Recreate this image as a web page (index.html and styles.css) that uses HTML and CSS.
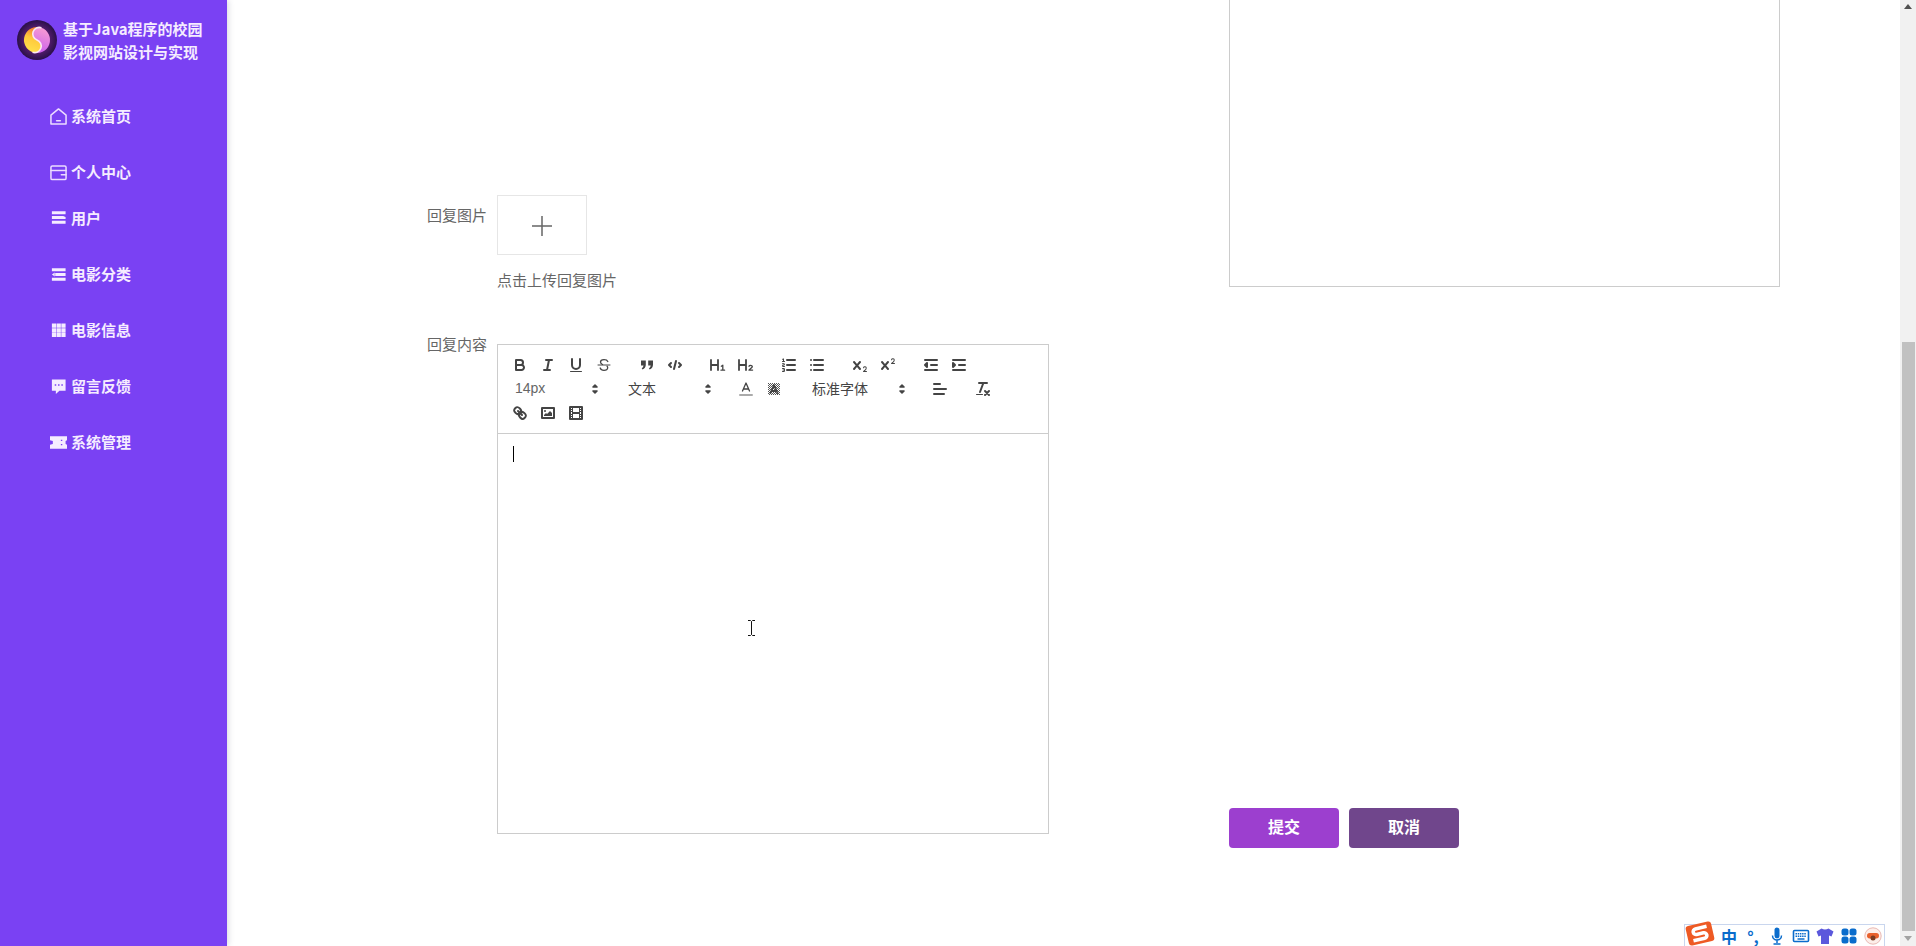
FILE: index.html
```html
<!DOCTYPE html>
<html lang="zh-CN">

<head>
    <meta charset="UTF-8">
    <meta name="viewport" content="width=device-width, initial-scale=1.0">
    <title>基于Java程序的校园影视网站设计与实现</title>

    <link rel="stylesheet" href="styles.css">
</head>

<body>
    <div class="app">
        <aside class="sidebar">
            <div class="brand">
                <svg class="brand-logo" viewBox="0 0 40 40">
                    <defs>
                        <radialGradient id="logoBg">
                            <stop offset="0" stop-color="#9a3fa8" />
                            <stop offset="0.7" stop-color="#4a1a66" />
                            <stop offset="1" stop-color="#2a1048" />
                        </radialGradient>
                        <linearGradient id="logoA" x1="0" y1="0" x2="0" y2="1">
                            <stop offset="0" stop-color="#ee6a2a" />
                            <stop offset="0.5" stop-color="#ffc93c" />
                            <stop offset="1" stop-color="#ffe04a" />
                        </linearGradient>
                        <linearGradient id="logoB" x1="0" y1="0" x2="0" y2="1">
                            <stop offset="0" stop-color="#f79ad4" />
                            <stop offset="1" stop-color="#c65cf0" />
                        </linearGradient>
                    </defs>
                    <circle cx="20" cy="20" r="20" fill="url(#logoBg)" />
                    <g transform="rotate(20 20 20)">
                        <path d="M20 7A13 13 0 0 0 20 33 6.500 6.500 0 0 0 20 20 6.500 6.500 0 0 1 20 7Z" fill="url(#logoA)" />
                        <path d="M20 7A13 13 0 0 1 20 33 6.500 6.500 0 0 0 20 20 6.500 6.500 0 0 1 20 7Z" fill="url(#logoB)" />
                        <path d="M20 7A6.500 6.500 0 0 0 20 20 6.500 6.500 0 0 1 20 33" fill="none" stroke="#fbe6f4" stroke-width="1.600" />
                    </g>
                </svg>
                <div class="brand-name">基于Java程序的校园<br>影视网站设计与实现</div>
            </div>

            <nav class="menu">
                <a class="menu-item">
                    <svg class="menu-icon line" viewBox="0 0 18 18"><path d="M9 1 17 7.500V17H1V7.500Z" /><path d="M7 13.500h4" /></svg>
                    系统首页
                </a>
                <a class="menu-item">
                    <svg class="menu-icon line" viewBox="0 0 18 18"><rect x="1" y="2" width="16" height="14.500" rx="1.500" /><path d="M1 7h16M12 11.500h5" /></svg>
                    个人中心
                </a>
                <a class="menu-item menu-item-short">
                    <svg class="menu-icon solid" viewBox="0 0 18 18"><path d="M2 2.500h14.500v3H2ZM2 7.500h12l2.500 1v2H2ZM2 12.500h14.500v3H2Z" /></svg>
                    用户
                </a>
                <a class="menu-item">
                    <svg class="menu-icon solid" viewBox="0 0 18 18"><path d="M2 2.500h14.500v3H2ZM5.500 7.500h11v3h-11ZM2 9l3-2v4ZM2 12.500h14.500v3H2Z" /></svg>
                    电影分类
                </a>
                <a class="menu-item">
                    <svg class="menu-icon solid" viewBox="0 0 18 18"><path d="M2 1.500h4.500V6H2ZM7 1.500h4.500V6H7ZM12 1.500h4.500V6H12ZM2 6.500h4.500V11H2ZM7 6.500h4.500V11H7ZM12 6.500h4.500V11H12ZM2 11.500h4.500V16H2ZM7 11.500h4.500V16H7ZM12 11.500h4.500V16H12Z" /></svg>
                    电影信息
                </a>
                <a class="menu-item">
                    <svg class="menu-icon solid" viewBox="0 0 18 18"><path fill-rule="evenodd" d="M2 1.500h14.500v12h-6.500l-3.800 3.500v-3.500H2ZM5 6.500v1.600h1.600V6.500ZM8.500 6.500v1.600h1.600V6.500ZM12 6.500v1.600h1.600V6.500Z" /></svg>
                    留言反馈
                </a>
                <a class="menu-item">
                    <svg class="menu-icon solid" viewBox="0 0 18 18"><path fill-rule="evenodd" d="M0 2.500h18v4l-1.500.8v3.400l1.500.8v4H0v-4l3-1V7.500l-3-1ZM11.500 6v1.500H13V6ZM11.500 10.500V12H13v-1.500Z" /></svg>
                    系统管理
                </a>
            </nav>
        </aside>

        <main class="main">
            <form class="form-col">
                <div class="form-row">
                    <label class="form-label">回复图片</label>
                    <div class="form-field">
                        <div class="upload-box">
                            <svg class="upload-plus" viewBox="0 0 20 20"><path d="M10 0v20M0 10h20" /></svg>
                        </div>
                        <div class="upload-tip">点击上传回复图片</div>
                    </div>
                </div>

                <div class="form-row form-row-editor">
                    <label class="form-label">回复内容</label>
                    <div class="editor">
                        <div class="toolbar">
                            <span class="tool-group">
                                <button type="button" class="tool"><svg viewBox="0 0 18 18"><path class="s" d="M5,4H9.500A2.500,2.500,0,0,1,12,6.500v0A2.500,2.500,0,0,1,9.500,9H5V4Z" /><path class="s" d="M5,9h5.500A2.500,2.500,0,0,1,13,11.500v0A2.500,2.500,0,0,1,10.500,14H5V9Z" /></svg></button>
                                <button type="button" class="tool"><svg viewBox="0 0 18 18"><path class="s" d="M7 4h6M5 14h6M8 14l2-10" /></svg></button>
                                <button type="button" class="tool"><svg viewBox="0 0 18 18"><path class="s" d="M5,3V9a4,4,0,0,0,4,4h0a4,4,0,0,0,4-4V3" /><rect class="f" height="1" rx=".5" width="12" x="3" y="15" /></svg></button>
                                <button type="button" class="tool"><svg viewBox="0 0 18 18"><path class="s thin" d="M3 9h12" /><path class="s mid" d="M12.800 5.500C12.300 4.300 10.900 3.700 9 3.700 6.800 3.700 5.500 4.500 5.500 6c0 1.200.8 2 2 2.500M5.200 12c.5 1.500 1.900 2.300 3.800 2.300 2.200 0 3.700-1 3.700-2.500 0-.7-.2-1.200-.6-1.600" /></svg></button>
                            </span>
                            <span class="tool-group">
                                <button type="button" class="tool"><svg viewBox="0 0 18 18"><path class="f" d="M3 4.500h4.800v4.300c0 2.300-1.300 4-3.300 4.700l-.8-1.200c1.100-.6 1.700-1.500 1.800-2.700H3ZM10.200 4.500H15v4.300c0 2.300-1.300 4-3.300 4.700l-.8-1.200c1.100-.6 1.700-1.500 1.800-2.700h-2.500Z" /></svg></button>
                                <button type="button" class="tool"><svg viewBox="0 0 18 18"><path class="s" d="M5 7 3 9l2 2M13 7l2 2-2 2M10 5 8 13" /></svg></button>
                            </span>
                            <span class="tool-group">
                                <button type="button" class="tool"><svg viewBox="0 0 18 18"><path class="s h" d="M2 4v10M9 4v10M2 9h7" /><path class="s mid" d="M12.300 10.200 13.800 9.200V14M12 14.200h3.600" /></svg></button>
                                <button type="button" class="tool"><svg viewBox="0 0 18 18"><path class="s h" d="M2 4v10M9 4v10M2 9h7" /><path class="s mid" d="M12 10.300c.3-1 3-1.300 3.300.2.200 1.200-2.300 2.200-3.300 3.600h3.600" /></svg></button>
                            </span>
                            <span class="tool-group">
                                <button type="button" class="tool"><svg viewBox="0 0 18 18"><path class="s" d="M7 4h8M7 9h8M7 14h8" /><path class="s thin" d="M2.500 5.500h2M3.500 5.500V2.800l-1 .5M2.500 7.700h1.800v1.400H2.600v1.400h1.900M2.500 12.500h1.900v3H2.500M3 14h1.400" /></svg></button>
                                <button type="button" class="tool"><svg viewBox="0 0 18 18"><path class="s" d="M6 4h9M6 9h9M6 14h9M3 4h.01M3 9h.01M3 14h.01" /></svg></button>
                            </span>
                            <span class="tool-group">
                                <button type="button" class="tool"><svg viewBox="0 0 18 18"><path class="f" d="M15.500,15H13.861a3.858,3.858,0,0,0,1.914-2.975,1.800,1.800,0,0,0-1.600-1.751A1.921,1.921,0,0,0,12.021,11.700a0.500,0.500,0,1,0,.957.291,0.914,0.914,0,0,1,1.053-.725,0.810,0.810,0,0,1,.744.762c0,1.076-1.170,1.870-1.940,2.431A1.456,1.456,0,0,0,12,15.500a0.500,0.500,0,0,0,.5.500h3A0.500,0.500,0,0,0,15.500,15Z" /><path class="f" d="M9.650,5.241a1,1,0,0,0-1.409.108L6,7.964,3.759,5.349A1,1,0,0,0,2.241,6.649L4.684,9.500,2.241,12.350A1,1,0,0,0,3.759,13.650L6,11.036,8.241,13.650a1,1,0,1,0,1.518-1.300L7.316,9.500,9.759,6.651A1,1,0,0,0,9.650,5.241Z" /></svg></button>
                                <button type="button" class="tool"><svg viewBox="0 0 18 18"><path class="f" d="M15.500,7H13.861a4.015,4.015,0,0,0,1.914-2.975,1.800,1.800,0,0,0-1.600-1.751A1.922,1.922,0,0,0,12.021,3.700a0.500,0.500,0,1,0,.957.291,0.917,0.917,0,0,1,1.053-.725,0.810,0.810,0,0,1,.744.762c0,1.077-1.164,1.925-1.934,2.486A1.423,1.423,0,0,0,12,7.500a0.500,0.500,0,0,0,.5.500h3A0.500,0.500,0,0,0,15.500,7Z" /><path class="f" d="M9.650,5.241a1,1,0,0,0-1.409.108L6,7.964,3.759,5.349A1,1,0,0,0,2.241,6.649L4.684,9.500,2.241,12.350A1,1,0,0,0,3.759,13.650L6,11.036,8.241,13.650a1,1,0,1,0,1.518-1.300L7.316,9.500,9.759,6.651A1,1,0,0,0,9.650,5.241Z" /></svg></button>
                            </span>
                            <span class="tool-group">
                                <button type="button" class="tool"><svg viewBox="0 0 18 18"><path class="s" d="M3 14h12M3 4h12M9 9h6" /><path class="s f" d="M5 7v4L3 9Z" /></svg></button>
                                <button type="button" class="tool"><svg viewBox="0 0 18 18"><path class="s" d="M3 14h12M3 4h12M9 9h6" /><path class="s f" d="M3 7v4l2-2Z" /></svg></button>
                            </span>
                            <span class="tool-group">
                                <span class="picker picker-latin">14px<svg viewBox="0 0 18 18"><path class="s f" d="M7 11l2 2 2-2ZM7 7l2-2 2 2Z" /></svg></span>
                            </span>
                            <span class="tool-group">
                                <span class="picker">文本<svg viewBox="0 0 18 18"><path class="s f" d="M7 11l2 2 2-2ZM7 7l2-2 2 2Z" /></svg></span>
                            </span>
                            <span class="tool-group">
                                <button type="button" class="tool"><svg viewBox="0 0 18 18"><path class="s light" d="M3 15h12" /><path class="s mid" d="M5.500 11 9 3l3.500 8M11.630 9H6.380" /></svg></button>
                                <button type="button" class="tool"><svg viewBox="0 0 18 18"><defs><pattern id="dots" width="2" height="2" patternUnits="userSpaceOnUse"><rect width="1" height="1" fill="#555" /><rect x="1" y="1" width="1" height="1" fill="#555" /></pattern></defs><rect x="3" y="3" width="12" height="12" fill="url(#dots)" /><path class="s h" d="M5.500 13 9 5l3.500 8M11.630 11H6.380" /></svg></button>
                            </span>
                            <span class="tool-group">
                                <span class="picker picker-wide">标准字体<svg viewBox="0 0 18 18"><path class="s f" d="M7 11l2 2 2-2ZM7 7l2-2 2 2Z" /></svg></span>
                            </span>
                            <span class="tool-group">
                                <button type="button" class="tool"><svg viewBox="0 0 18 18"><path class="s" d="M3 9h12M3 14h10M3 4h6" /></svg></button>
                            </span>
                            <span class="tool-group">
                                <button type="button" class="tool"><svg viewBox="0 0 18 18"><path class="s" d="M5 3h8M6 12 9.350 3M11 11l4 4M15 11l-4 4" /><rect class="f" height="1" rx=".5" width="7" x="2" y="14" /></svg></button>
                            </span>
                            <span class="tool-group">
                                <button type="button" class="tool"><svg viewBox="0 0 18 18"><path class="s" d="M7 7l4 4" /><path class="s" d="M8.900,4.577a3.476,3.476,0,0,1,.36,4.679A3.476,3.476,0,0,1,4.577,8.900C3.185,7.500,2.035,6.400,4.217,4.217S7.500,3.185,8.900,4.577Z" /><path class="s" d="M13.423,9.100a3.476,3.476,0,0,0-4.679-.36,3.476,3.476,0,0,0,.36,4.679c1.392,1.392,2.500,2.542,4.679.36S14.815,10.500,13.423,9.100Z" /></svg></button>
                                <button type="button" class="tool"><svg viewBox="0 0 18 18"><rect class="s" height="10" width="12" x="3" y="4" /><circle class="f" cx="6" cy="7" r="1" /><path class="f" d="M5 12v-1l2-2 1 1 3-3 2 2v3Z" /></svg></button>
                                <button type="button" class="tool"><svg viewBox="0 0 18 18"><rect class="s" height="12" width="12" x="3" y="3" /><rect class="f" height="12" width="1" x="5" y="3" /><rect class="f" height="12" width="1" x="12" y="3" /><rect class="f" height="2" width="8" x="5" y="8" /><rect class="f" height="1" width="3" x="3" y="5" /><rect class="f" height="1" width="3" x="3" y="7" /><rect class="f" height="1" width="3" x="3" y="10" /><rect class="f" height="1" width="3" x="3" y="12" /><rect class="f" height="1" width="3" x="12" y="5" /><rect class="f" height="1" width="3" x="12" y="7" /><rect class="f" height="1" width="3" x="12" y="10" /><rect class="f" height="1" width="3" x="12" y="12" /></svg></button>
                            </span>
                        </div>
                        <div class="editor-body">
                            <span class="caret"></span>
                            <svg class="ibeam" viewBox="0 0 9 16"><path d="M1 .5h2.500l1 1 1-1H8M4.500 1.500v13M1 15.500h2.500l1-1 1 1H8" /></svg>
                        </div>
                    </div>
                </div>
            </form>

            <div class="side-col">
                <div class="preview-box"></div>
                <div class="actions">
                    <button type="button" class="btn btn-submit">提交</button>
                    <button type="button" class="btn btn-cancel">取消</button>
                </div>
            </div>
        </main>

        <div class="scrollbar">
            <div class="scroll-arrow scroll-up"><svg viewBox="0 0 10 6"><path d="M0 6 5 0l5 6Z" /></svg></div>
            <div class="scroll-track"><div class="scroll-thumb"></div></div>
            <div class="scroll-arrow"><svg viewBox="0 0 10 6"><path d="M0 0h10L5 6Z" /></svg></div>
        </div>
    </div>

    <div class="ime">
        <svg class="ime-logo" viewBox="0 0 32 27">
            <g transform="rotate(-13 16 13.500)">
                <rect x="3" y="3.500" width="26" height="20" rx="3" fill="#ee5a24" />
                <path d="M24 8H12.500a2.800 2.800 0 0 0 0 5.600h7a2.800 2.800 0 0 1 0 5.600H8" fill="none" stroke="#fff" stroke-width="3.600" />
            </g>
        </svg>
        <span class="ime-text">中</span>
        <span class="ime-text ime-punct">°,</span>
        <svg class="ime-icon" viewBox="0 0 18 18"><path d="M6.500 3a2.500 2.500 0 0 1 5 0v6a2.500 2.500 0 0 1-5 0Z" fill="#0a6ccc" /><path d="M4.500 8.500a4.500 4.500 0 0 0 9 0M9 13.500V16M5.500 17h7" fill="none" stroke="#0a6ccc" stroke-width="1.500" /></svg>
        <svg class="ime-icon" viewBox="0 0 18 18"><rect x="1.500" y="3.500" width="15" height="11" rx="1" fill="none" stroke="#0a6ccc" stroke-width="1.600" /><path d="M3.500 6.800h11M3.500 9.300h11" stroke="#0a6ccc" stroke-width="1.500" stroke-dasharray="1.500 .7" /><path d="M5.500 12h7" stroke="#0a6ccc" stroke-width="1.500" /></svg>
        <svg class="ime-icon" viewBox="0 0 18 18"><path d="M5.500 1.500 .5 4.500l2 5 2.500-1V17h8V8.500l2.500 1 2-5-5-3q-3.500 2-7 0Z" fill="#5b58dc" /></svg>
        <svg class="ime-icon" viewBox="0 0 18 18"><g fill="#0a6ccc"><rect x="1.500" y="1.500" width="7" height="7" rx="2.500" /><rect x="9.500" y="1.500" width="7" height="7" rx="2.500" /><rect x="1.500" y="9.500" width="7" height="7" rx="2.500" /><rect x="9.500" y="9.500" width="7" height="7" rx="2.500" /></g></svg>
        <svg class="ime-icon" viewBox="0 0 18 18"><circle cx="9" cy="9" r="8.200" fill="#fdeee9" stroke="#e9b9b4" /><rect x="3" y="6" width="12" height="5.500" rx="2.700" fill="#e8602c" /><circle cx="9" cy="11" r="2.500" fill="#7a3a20" /></svg>
    </div>
</body>

</html>
```

FILE: styles.css
```css
* {
    box-sizing: border-box;
}

html,
body {
    margin: 0;
    height: 100%;
    overflow: hidden;
    background: #fff;
    font-family: "Noto Sans CJK SC", "Noto Sans", sans-serif;
    color: #666;
}

.app {
    display: flex;
    height: 946px;
}

/* sidebar */
.sidebar {
    width: 227px;
    flex-shrink: 0;
    background: #7a41f3;
    box-shadow: 1px 0 6px rgba(64, 64, 100, 0.22);
    color: #f5ecff;
    position: relative;
}

.brand {
    display: flex;
    align-items: flex-start;
    gap: 6px;
    padding: 17px 0 0 17px;
    height: 88px;
}

.brand-logo {
    width: 40px;
    height: 40px;
    margin-top: 3px;
    flex-shrink: 0;
}

.brand-name {
    font-size: 15px;
    font-weight: 700;
    line-height: 23px;
    white-space: nowrap;
}

.menu {
    display: flex;
    flex-direction: column;
}

.menu-item {
    display: flex;
    align-items: center;
    gap: 4px;
    height: 56px;
    padding-left: 50px;
    font-size: 15px;
    font-weight: 700;
    line-height: 20px;
}

.menu-item-short {
    height: 35px;
    margin-bottom: 11px;
}

.menu-icon {
    width: 17px;
    height: 17px;
    flex-shrink: 0;
}

.menu-icon.line {
    fill: none;
    stroke: #ecdcff;
    stroke-width: 1.6;
    stroke-linejoin: round;
    stroke-linecap: round;
}

.menu-icon.solid {
    fill: #f5ecff;
}

/* main */
.main {
    flex: 1;
    display: flex;
    min-width: 0;
}

.form-col {
    width: 1002px;
    padding: 195px 0 0 193px;
    flex-shrink: 0;
}

.form-row {
    display: flex;
}

.form-row-editor {
    margin-top: 54px;
}

.form-label {
    width: 77px;
    height: 40px;
    padding-right: 10px;
    font-size: 15px;
    line-height: 40px;
    text-align: right;
    white-space: nowrap;
}

.form-row-editor .form-label {
    margin-top: -20px;
}

.upload-box {
    width: 90px;
    height: 60px;
    border: 1px solid #e6e6e6;
    display: flex;
    align-items: center;
    justify-content: center;
}

.upload-plus {
    width: 20px;
    height: 20px;
    margin-top: 1px;
    fill: none;
    stroke: #666;
    stroke-width: 1.5;
}

.upload-tip {
    margin-top: 15px;
    font-size: 15px;
    line-height: 20px;
}

/* editor */
.editor {
    width: 552px;
    height: 490px;
    border: 1px solid #ccc;
    display: flex;
    flex-direction: column;
}

.toolbar {
    display: flex;
    flex-wrap: wrap;
    padding: 8px;
    border-bottom: 1px solid #ccc;
}

.tool-group {
    display: flex;
    margin-right: 15px;
}

.tool {
    width: 28px;
    height: 24px;
    padding: 3px 5px;
    border: 0;
    background: none;
}

.tool svg {
    display: block;
    width: 18px;
    height: 18px;
}

.s {
    fill: none;
    stroke: #444;
    stroke-width: 2;
    stroke-linecap: round;
    stroke-linejoin: round;
}

.s.thin {
    stroke-width: 1;
}

.s.mid {
    stroke-width: 1.3;
}

.s.h {
    stroke-width: 1.8;
}

.s.light {
    stroke: #aaa;
}

.f,
.s.f {
    fill: #444;
}

.picker {
    width: 98px;
    height: 24px;
    padding: 0 0 2px 9px;
    font-size: 14px;
    line-height: 22px;
    color: #444;
    display: flex;
    align-items: center;
    justify-content: space-between;
}

.picker-latin {
    font-family: "Liberation Sans", sans-serif;
    color: #666;
}

.picker svg {
    width: 18px;
    height: 18px;
    margin-bottom: -2px;
}

.picker .s {
    stroke-width: 1.6;
}

.picker-wide {
    width: 108px;
}

.editor-body {
    flex: 1;
    padding: 12px 15px;
    position: relative;
}

.caret {
    display: block;
    width: 1px;
    height: 16px;
    background: #000;
}

.ibeam {
    position: absolute;
    left: 249px;
    top: 186px;
    width: 9px;
    height: 16px;
    fill: none;
    stroke: #111;
    stroke-width: 1;
}

/* right column */
.side-col {
    flex: 1;
    display: flex;
    flex-direction: column;
}

.preview-box {
    width: 551px;
    height: 287px;
    border: 1px solid #ccc;
    border-top: 0;
}

.actions {
    display: flex;
    gap: 10px;
    margin-top: 521px;
}

.btn {
    width: 110px;
    height: 40px;
    padding: 0 0 5px;
    border: 0;
    border-radius: 4px;
    color: #fff;
    font-family: inherit;
    font-size: 16px;
    font-weight: 700;
}

.btn-submit {
    background: #9c3fcf;
}

.btn-cancel {
    background: #70468c;
}

/* browser scrollbar */
.scrollbar {
    width: 16px;
    flex-shrink: 0;
    display: flex;
    flex-direction: column;
    background: #f1f1f1;
}

.scroll-arrow {
    height: 17px;
    display: flex;
    align-items: center;
    justify-content: center;
}

.scroll-arrow svg {
    width: 8px;
    height: 5px;
    fill: #a3a3a3;
}

.scroll-up {
    align-items: flex-start;
    padding-top: 4px;
}

.scroll-up svg {
    fill: #505050;
}

.scroll-track {
    flex: 1;
    padding: 326px 1px 0 2px;
}

.scroll-thumb {
    height: 589px;
    background: #c1c1c1;
}

/* input method bar, floats over the page */
.ime {
    position: absolute;
    right: 31px;
    bottom: 0;
    width: 201px;
    height: 22px;
    display: flex;
    align-items: center;
    gap: 6px;
    padding-left: 35px;
    background: #fff;
    border: 1px solid #c9d6ee;
    border-bottom: 0;
}

.ime-logo {
    position: absolute;
    left: -1px;
    top: -5px;
    width: 32px;
    height: 27px;
}

.ime-text {
    color: #0a6ccc;
    font-size: 16px;
    font-weight: 700;
    line-height: 20px;
    width: 18px;
    text-align: center;
    flex-shrink: 0;
}

.ime-icon {
    width: 18px;
    height: 18px;
    flex-shrink: 0;
}
```
